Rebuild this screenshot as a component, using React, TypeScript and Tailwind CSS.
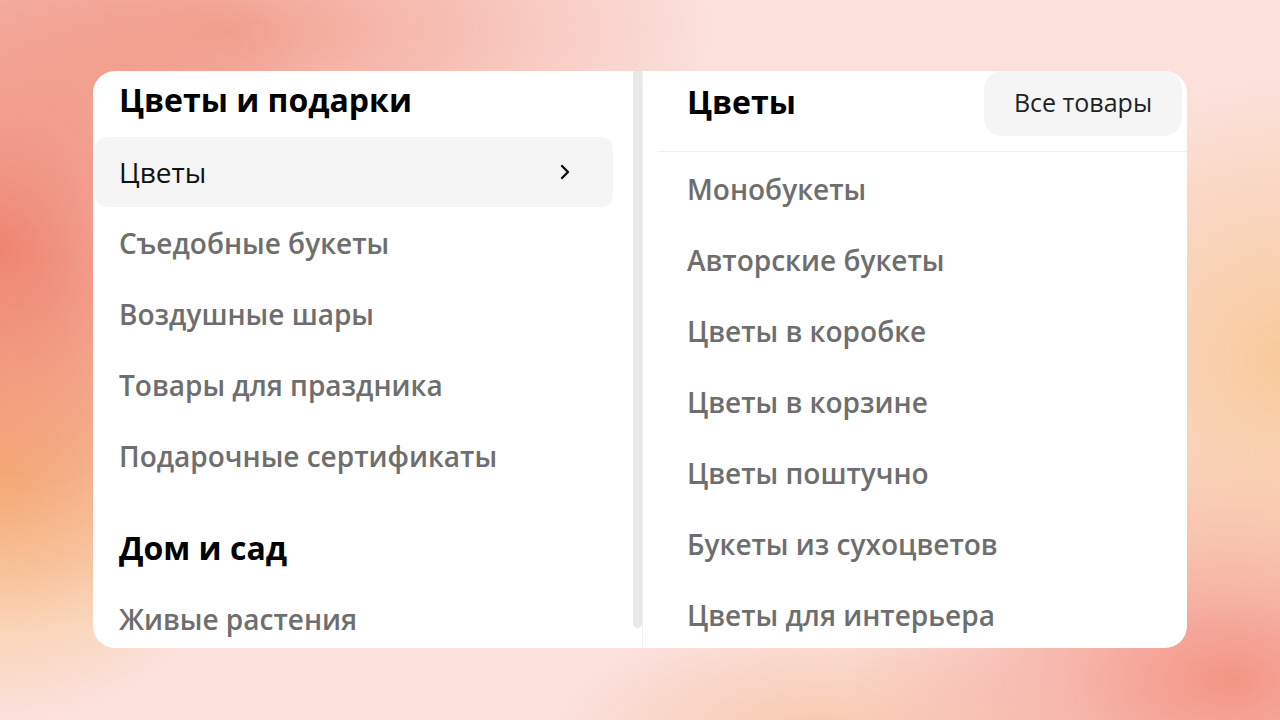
import React from 'react';

const leftItems = [
  'Съедобные букеты',
  'Воздушные шары',
  'Товары для праздника',
  'Подарочные сертификаты',
];

const rightItems = [
  'Монобукеты',
  'Авторские букеты',
  'Цветы в коробке',
  'Цветы в корзине',
  'Цветы поштучно',
  'Букеты из сухоцветов',
  'Цветы для интерьера',
];

function ChevronRight() {
  return (
    <svg width="20" height="20" viewBox="0 0 20 20" fill="none">
      <path d="M7 4L13 10L7 16" stroke="#111" strokeWidth="2.4" strokeLinecap="round" strokeLinejoin="round" />
    </svg>
  );
}

export default function App() {
  return (
    <div
      className="flex h-[720px] w-[1280px] overflow-hidden bg-[#fbe0dc] font-['Open_Sans','Noto_Sans',sans-serif]"
      style={{
        backgroundImage:
          'radial-gradient(ellipse 360px 380px at 0px 250px, #ee8470 0%, rgba(238,132,112,0) 100%),' +
          'radial-gradient(ellipse 260px 250px at 0px 470px, #f8c078 0%, rgba(248,192,120,0) 100%),' +
          'radial-gradient(ellipse 480px 190px at 230px 30px, #f2a291 0%, rgba(242,162,145,0) 100%),' +
          'radial-gradient(ellipse 300px 280px at 1290px 360px, #f8c99a 0%, rgba(248,201,154,0) 100%),' +
          'radial-gradient(ellipse 380px 240px at 1230px 680px, #f39585 0%, rgba(243,149,133,0) 100%),' +
          'radial-gradient(ellipse 260px 110px at 820px 730px, #f8c8ad 0%, rgba(248,200,173,0) 100%)',
      }}
    >
      <div className="ml-[93px] mt-[71px] flex h-[577px] w-[1094px] overflow-hidden rounded-[22px] bg-white">
        {/* left column */}
        <div className="flex w-[550px] shrink-0 border-r border-[#f0f0f0]">
          <div className="w-[540px] shrink-0 overflow-hidden">
            <div className="flex h-[66px] items-center px-[26px] pb-[8px] text-[32px] font-bold text-black">
              Цветы и подарки
            </div>
            <div className="mr-[20px] ml-[2px] flex h-[70px] items-center justify-between rounded-[12px] bg-[#f5f5f5] pl-[24px] pr-[38px] text-[28px] text-[#111]">
              <span>Цветы</span>
              <ChevronRight />
            </div>
            {leftItems.map((item) => (
              <div key={item} className="flex h-[71px] items-center px-[26px] text-[28px] font-semibold text-[#6e6e6e]">
                {item}
              </div>
            ))}
            <div className="mt-[22px] flex h-[70px] items-center px-[26px] text-[32px] font-bold text-black">
              Дом и сад
            </div>
            <div className="flex h-[71px] items-center px-[26px] text-[28px] font-semibold text-[#6e6e6e]">
              Живые растения
            </div>
          </div>
          <div className="flex w-[10px] shrink-0 justify-start">
            <div className="h-[557px] w-[9px] rounded-b-[5px] bg-[#e8e8e8]" />
          </div>
        </div>

        {/* right column */}
        <div className="flex flex-1 flex-col">
          <div className="ml-[15px] flex h-[81px] shrink-0 items-start justify-between border-b border-[#efefef]">
            <div className="flex h-[62px] items-center pl-[29px] text-[32px] font-bold text-black">Цветы</div>
            <div className="mr-[5px] flex h-[65px] w-[198px] items-center justify-center rounded-[18px] bg-[#f5f5f5] pb-[2px] text-[25px] text-[#222]">
              Все товары
            </div>
          </div>
          {rightItems.map((item) => (
            <div key={item} className="flex h-[71px] shrink-0 items-center pl-[44px] pt-[2px] text-[28px] font-semibold text-[#6e6e6e]">
              {item}
            </div>
          ))}
        </div>
      </div>
    </div>
  );
}
